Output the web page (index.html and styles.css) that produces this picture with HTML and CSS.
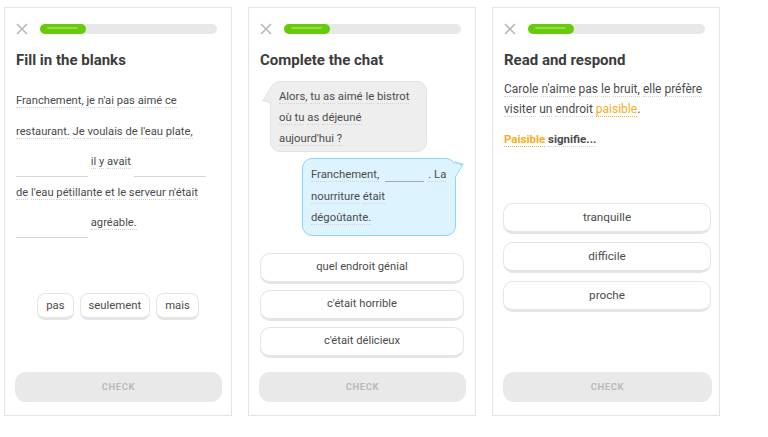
FILE: index.html
```html
<!DOCTYPE html>
<html>
<head>
<meta charset="utf-8">
<link rel="stylesheet" href="styles.css">
</head>
<body>
<div class="screens">
  <section class="panel">
    <div class="top">
      <svg class="close" viewBox="0 0 12 12"><path d="M1 1L11 11M11 1L1 11"/></svg>
      <div class="track"><div class="fill"></div></div>
    </div>
    <h1 class="title">Fill in the blanks</h1>
    <p class="passage">
      <span class="w">Franchement,</span> <span class="w">je</span> <span class="w">n'ai</span> <span class="w">pas</span> <span class="w">aimé</span> <span class="w">ce</span><br>
      <span class="w">restaurant.</span> <span class="w">Je</span> <span class="w">voulais</span> <span class="w">de</span> <span class="w">l'eau</span> <span class="w">plate,</span><br>
      <span class="blank"></span> <span class="w">il</span> <span class="w">y</span> <span class="w">avait</span> <span class="blank"></span><br>
      <span class="w">de</span> <span class="w">l'eau</span> <span class="w">pétillante</span> <span class="w">et</span> <span class="w">le</span> <span class="w">serveur</span> <span class="w">n'était</span><br>
      <span class="blank"></span> <span class="w">agréable.</span>
    </p>
    <div class="chips">
      <span class="chip">pas</span>
      <span class="chip">seulement</span>
      <span class="chip">mais</span>
    </div>
    <div class="check">CHECK</div>
  </section>

  <section class="panel">
    <div class="top">
      <svg class="close" viewBox="0 0 12 12"><path d="M1 1L11 11M11 1L1 11"/></svg>
      <div class="track"><div class="fill"></div></div>
    </div>
    <h1 class="title">Complete the chat</h1>
    <div class="chat">
      <div class="bubble left">
        <span class="w">Alors,</span> <span class="w">tu</span> <span class="w">as</span> <span class="w">aimé</span> <span class="w">le</span> <span class="w">bistrot</span><br>
        <span class="w">où</span> <span class="w">tu</span> <span class="w">as</span> <span class="w">déjeuné</span><br>
        <span class="w">aujourd'hui</span> <span class="w">?</span>
      </div>
      <div class="bubble right">
        <span class="w">Franchement,</span><span class="sblank"></span><span class="w">. La</span><br>
        <span class="w">nourriture</span> <span class="w">était</span><br>
        <span class="w">dégoûtante.</span>
      </div>
    </div>
    <div class="options chat-options">
      <div class="option">quel endroit génial</div>
      <div class="option">c'était horrible</div>
      <div class="option">c'était délicieux</div>
    </div>
    <div class="check">CHECK</div>
  </section>

  <section class="panel third">
    <div class="top">
      <svg class="close" viewBox="0 0 12 12"><path d="M1 1L11 11M11 1L1 11"/></svg>
      <div class="track"><div class="fill"></div></div>
    </div>
    <h1 class="title">Read and respond</h1>
    <p class="reading">
      <span class="w">Carole</span> <span class="w">n'aime</span> <span class="w">pas</span> <span class="w">le</span> <span class="w">bruit,</span> <span class="w">elle</span> <span class="w">préfère</span><br>
      <span class="w">visiter</span> <span class="w">un</span> <span class="w">endroit</span> <span class="w hl">paisible</span>.
    </p>
    <p class="question"><span class="w hl">Paisible</span> <span class="w">signifie...</span></p>
    <div class="options read-options">
      <div class="option">tranquille</div>
      <div class="option">difficile</div>
      <div class="option">proche</div>
    </div>
    <div class="check">CHECK</div>
  </section>
</div>
</body>
</html>
```

FILE: styles.css
```css
* { box-sizing: border-box; }
html, body { margin: 0; background: #fff; }
body {
  font-family: Roboto, "Noto Sans", sans-serif;
  color: #4b4b4b;
}
.screens {
  display: flex;
  gap: 16px;
  padding: 7px 0 0 4px;
}
.panel {
  width: 228px;
  height: 409px;
  border: 1px solid #e5e5e5;
  padding: 16px 10px 13px 10px;
  display: flex;
  flex-direction: column;
}
.panel.third {
  padding-right: 8px;
}
.top {
  display: flex;
  align-items: center;
  gap: 12px;
  height: 10px;
  padding-right: 4px;
}
.panel.third .top {
  padding-right: 6px;
}
.close {
  width: 12px;
  height: 12px;
  flex: none;
  margin-left: 1px;
}
.close path {
  stroke: #b8b8b8;
  stroke-width: 1.6;
  fill: none;
}
.track {
  flex: 1;
  height: 10px;
  border-radius: 5px;
  background: #e8e8e8;
}
.fill {
  position: relative;
  width: 46px;
  height: 10px;
  border-radius: 5px;
  background: #66cc0a;
}
.fill::after {
  content: "";
  position: absolute;
  left: 7px;
  right: 8px;
  top: 3px;
  height: 2px;
  border-radius: 1px;
  background: rgba(255, 255, 255, 0.3);
}
.title {
  margin: 17px 0 0 1px;
  font-size: 15px;
  line-height: 18px;
  font-weight: 700;
  color: #3c3c3c;
}
.w {
  border-bottom: 1.5px dotted #d2d2d2;
}
.w.hl {
  color: #f7ae24;
  border-bottom-color: #f7ae24;
}
.passage {
  margin: 17px 0 0 1px;
  font-size: 11.2px;
  line-height: 30.6px;
  white-space: nowrap;
}
.blank {
  display: inline-block;
  width: 72px;
  height: 0;
  border-bottom: 1px solid #d6d6d6;
  vertical-align: -12px;
}
.chips {
  display: flex;
  justify-content: center;
  gap: 6px;
  margin-top: 54px;
}
.chip {
  height: 27px;
  padding: 0 8px;
  border: 1.5px solid #e5e5e5;
  border-bottom-width: 3px;
  border-radius: 8px;
  font-size: 11.3px;
  line-height: 23px;
  color: #4b4b4b;
}
.check {
  margin-top: auto;
  height: 30px;
  border-radius: 11px;
  background: #e9e9e9;
  color: #bababa;
  font-size: 9.5px;
  font-weight: 700;
  letter-spacing: 0.6px;
  text-align: center;
  line-height: 30px;
  margin-right: -1px;
}
.chat {
  display: flex;
  flex-direction: column;
  margin-top: 12px;
}
.bubble {
  position: relative;
  font-size: 11.3px;
  line-height: 21px;
  border-radius: 10px;
  padding: 4px 8px 4px 8px;
  white-space: nowrap;
}
.bubble.left {
  align-self: flex-start;
  margin-left: 11px;
  width: 157px;
  height: 71px;
  background: #eeeeee;
  border: 1px solid #e3e3e3;
}
.bubble.left::before {
  content: "";
  position: absolute;
  left: -6px;
  top: 7px;
  width: 11px;
  height: 11px;
  background: #eeeeee;
  border-left: 1px solid #e3e3e3;
  border-bottom: 1px solid #e3e3e3;
  transform: skewY(-35deg) rotate(45deg);
}
.bubble.right {
  align-self: flex-end;
  margin-right: 9px;
  margin-top: 6px;
  width: 154px;
  height: 78px;
  background: #ddf4ff;
  border: 1px solid #84d8ff;
  padding-top: 5px;
  line-height: 21.5px;
}
.bubble.right::after {
  content: "";
  position: absolute;
  right: -6px;
  top: 5px;
  width: 11px;
  height: 11px;
  background: #ddf4ff;
  border-right: 1px solid #84d8ff;
  border-top: 1px solid #84d8ff;
  transform: skewY(-35deg) rotate(45deg);
}
.sblank {
  display: inline-block;
  width: 39px;
  height: 0;
  border-bottom: 1px solid #a8a8a8;
  vertical-align: -4px;
  margin: 0 4px 0 6px;
}
.options {
  display: flex;
  flex-direction: column;
  gap: 6px;
}
.chat-options {
  margin: 17px 1px 0 1px;
}
.chat-options .option {
  height: 31px;
}
.read-options {
  margin-top: 54px;
  gap: 8px;
}
.option {
  height: 31px;
  border: 1.5px solid #e5e5e5;
  border-bottom-width: 3px;
  border-radius: 10px;
  font-size: 11.2px;
  line-height: 26px;
  text-align: center;
  color: #4b4b4b;
}
.read-options .option {
  font-size: 11.7px;
}
.reading {
  margin: 10px 0 0 1px;
  font-size: 12px;
  line-height: 20px;
  white-space: nowrap;
}
.question {
  margin: 10px 0 0 1px;
  font-size: 11.5px;
  line-height: 20px;
  font-weight: 700;
}
```
